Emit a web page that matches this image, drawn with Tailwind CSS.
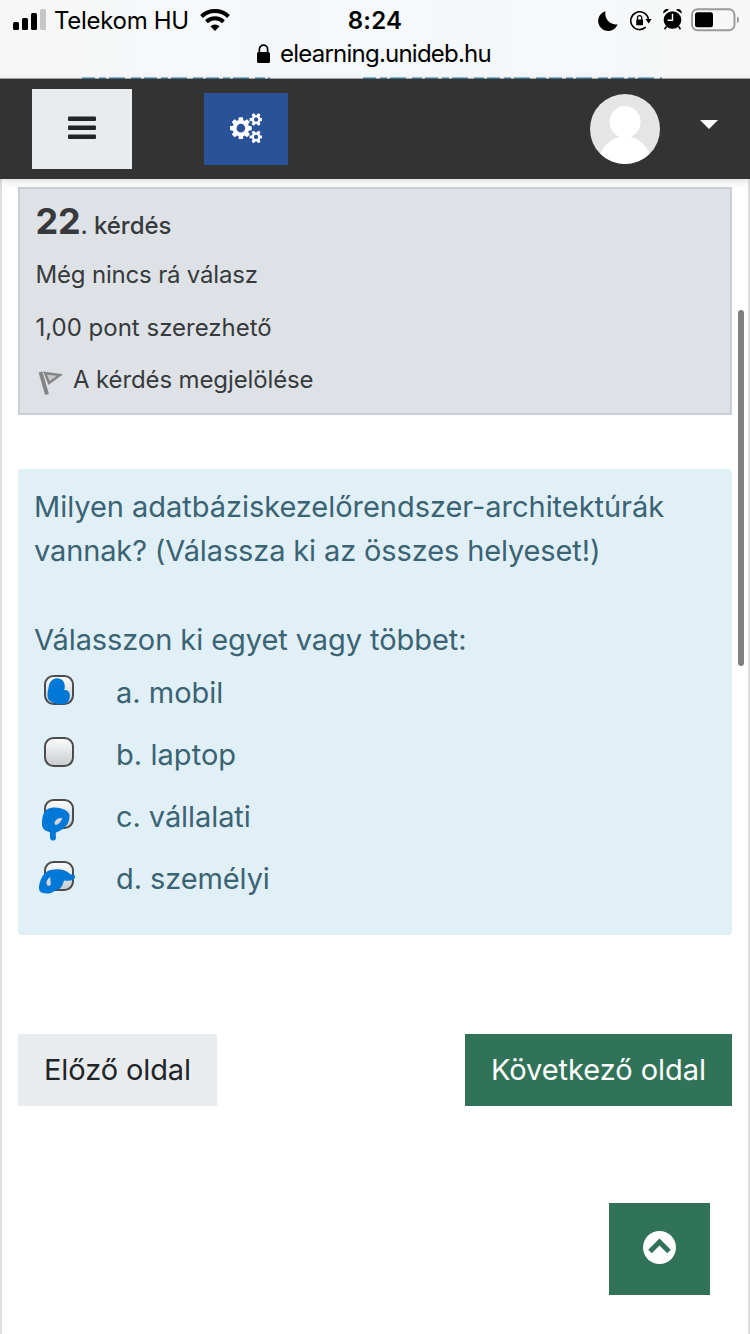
<!DOCTYPE html>
<html lang="hu">
<head>
<meta charset="utf-8">
<title>elearning.unideb.hu</title>
<script src="https://cdn.jsdelivr.net/npm/@tailwindcss/browser@4"></script>
</head>
<body class="bg-white">
<div class="relative flex h-[1334px] w-[750px] flex-col overflow-hidden font-['Inter','Noto_Sans',sans-serif]">

  <!-- Status bar and address -->
  <header class="relative h-[79px] shrink-0 bg-linear-to-r from-[#f7f7f7] via-[#f5f9fc] to-[#f7f7f7]">
    <div class="grid h-[40px] grid-cols-[300px_150px_300px] items-center">
      <div class="flex items-center pl-[13px]">
        <svg class="mt-[-1px] h-[21px] w-[33px]" viewBox="0 0 33 21"><rect x="0" y="13" width="6" height="8" rx="1.5"/><rect x="9" y="9" width="6" height="12" rx="1.5"/><rect x="18" y="4" width="6" height="17" rx="1.5"/><rect x="27" y="0" width="6" height="21" rx="1.5" fill="#c6c6c6"/></svg>
        <span class="ml-[8px] pt-[2px] text-[24px] leading-[36px] tracking-[-0.3px] whitespace-nowrap">Telekom HU</span>
        <svg class="ml-[11px] h-[22px] w-[30px]" viewBox="0 0 30 22" fill="none" stroke="#000" stroke-width="4"><path d="M1.500 7.500a19.500 19.500 0 0 1 27 0"/><path d="M6.500 12.700a12.300 12.300 0 0 1 17 0"/><path d="M15 22l-4.600-4.700a6.500 6.500 0 0 1 9.200 0z" fill="#000" stroke="none"/></svg>
      </div>
      <div class="pt-[2px] text-center text-[24px] leading-[36px] font-semibold tracking-[0.2px]">8:24</div>
      <div class="flex items-center pl-[148px]">
        <svg class="mt-[1px] h-[20px] w-[20px]" viewBox="0 0 20 20"><path d="M7.500 0.300A10 10 0 1 0 19.600 13.300 10.800 10.800 0 0 1 7.500 0.300z"/></svg>
        <svg class="mt-[1px] ml-[12px] h-[20px] w-[22px]" viewBox="0 0 22 20"><path d="M15.700 16.200A8.900 8.900 0 1 1 18.400 8" fill="none" stroke="#000" stroke-width="1.600"/><path d="M15.600 8h6l-3 4.500z"/><rect x="6.200" y="8.500" width="6.800" height="5.800" rx=".6"/><path d="M7.500 9V6.800a2.100 2.100 0 0 1 4.200 0V9" fill="none" stroke="#000" stroke-width="1.300"/></svg>
        <svg class="mt-[-1px] ml-[11px] h-[21px] w-[19px]" viewBox="0 0 19 21"><circle cx="9.500" cy="11" r="8.800"/><path d="M0.300 4.500A3.600 3.600 0 0 1 6 0.800zM18.700 4.500A3.600 3.600 0 0 0 13 0.800z"/><path d="M3.500 17.500l-2 2.700M15.500 17.500l2 2.700" stroke="#000" stroke-width="1.600"/><path d="M9.500 4.800v6.400H4.600" fill="none" stroke="#fff" stroke-width="1.400"/></svg>
        <svg class="ml-[9px] h-[24px] w-[49px]" viewBox="0 0 49 24"><rect x="1" y="1.200" width="42.500" height="21" rx="5.500" fill="none" stroke="#999" stroke-width="1.900"/><rect x="4" y="4.200" width="18" height="15" rx="2.500"/><path d="M46 8.500c1.700.8 2 1.800 2 3.200s-.3 2.500-2 3.300z" fill="#999"/></svg>
      </div>
    </div>
    <div class="flex h-[30px] items-center pl-[257px]">
      <svg class="mt-[-2px] h-[20px] w-[13px]" viewBox="0 0 13 20"><rect x="0" y="8" width="13" height="11" rx="1.500"/><path d="M2.400 9V5.200a4.100 4.100 0 0 1 8.200 0V9" fill="none" stroke="#000" stroke-width="1.700"/></svg>
      <span class="mt-[-2px] ml-[10px] text-[24px] leading-[30px] tracking-[-0.77px]">elearning.unideb.hu</span>
    </div>
    <!-- Sliver of page heading behind the toolbar -->
    <svg class="absolute bottom-0 left-0 h-[2px] w-[750px]" viewBox="0 0 750 2"><path d="M0 1.500H750" stroke="#aaa"/><path d="M82 1.300H270M363 1.300H662" stroke="#3c7592" stroke-width="1.400" stroke-dasharray="13 4 7 3 16 6 10 3"/></svg>
  </header>

  <!-- Site navigation -->
  <nav class="relative z-10 flex h-[100px] shrink-0 items-center bg-[#333] pl-[32px] shadow-[0_2px_8px_rgba(0,0,0,0.15)]">
    <button class="flex h-[80px] w-[100px] items-center justify-center bg-[#e9ecef]" aria-label="Menü">
      <svg class="mt-[-3px] h-[24px] w-[28px]" viewBox="0 0 28 24" fill="#212529"><rect y="0.500" width="28" height="4.600" rx="1"/><rect y="9.500" width="28" height="4.600" rx="1"/><rect y="18.500" width="28" height="4.600" rx="1"/></svg>
    </button>
    <button class="ml-[72px] flex h-[72px] w-[84px] items-center justify-center bg-[#2a5298]" aria-label="Beállítások">
      <svg class="mt-[-2px] h-[30.400px] w-[32.600px]" viewBox="0 0 1920 1792" fill="#fff"><path d="M896 896q0-106-75-181t-181-75-181 75-75 181 75 181 181 75 181-75 75-181zm768 512q0-52-38-90t-90-38-90 38-38 90q0 53 37.500 90.500t90.500 37.500 90.500-37.500 37.500-90.500zm0-1024q0-52-38-90t-90-38-90 38-38 90q0 53 37.500 90.500t90.500 37.500 90.500-37.500 37.500-90.500zm-384 421v185q0 10-7 19.500t-16 10.500l-155 24q-11 35-32 76 34 48 90 115 7 11 7 20 0 12-7 19-23 30-82.500 89.500t-78.500 59.500q-11 0-21-7l-115-90q-37 19-77 31-11 108-23 155-7 24-30 24h-186q-11 0-20-7.500t-10-17.500l-23-153q-34-10-75-31l-118 89q-7 7-20 7-11 0-21-8-144-133-144-160 0-9 7-19 10-14 41-53t47-61q-23-44-35-82l-152-24q-10-1-17-9.500t-7-19.500v-185q0-10 7-19.500t16-10.500l155-24q11-35 32-76-34-48-90-115-7-11-7-20 0-12 7-20 22-30 82-89t79-59q11 0 21 7l115 90q34-18 77-32 11-108 23-154 7-24 30-24h186q11 0 20 7.500t10 17.500l23 153q34 10 75 31l118-89q8-7 20-7 11 0 21 8 144 133 144 160 0 8-7 19-12 16-42 54t-45 60q23 48 34 82l152 23q10 2 17 10.500t7 19.500zm640 533v140q0 16-149 31-12 27-30 52 51 113 51 138 0 4-4 7-122 71-124 71-8 0-46-47t-52-68q-20 2-30 2t-30-2q-14 21-52 68t-46 47q-2 0-124-71-4-3-4-7 0-25 51-138-18-25-30-52-149-15-149-31v-140q0-16 149-31 13-29 30-52-51-113-51-138 0-4 4-7 4-2 35-20t59-34 30-16q8 0 46 46.500t52 67.500q20-2 30-2t30 2q51-71 92-112l6-2q4 0 124 70 4 3 4 7 0 25-51 138 17 23 30 52 149 15 149 31zm0-1024v140q0 16-149 31-12 27-30 52 51 113 51 138 0 4-4 7-122 71-124 71-8 0-46-47t-52-68q-20 2-30 2t-30-2q-14 21-52 68t-46 47q-2 0-124-71-4-3-4-7 0-25 51-138-18-25-30-52-149-15-149-31v-140q0-16 149-31 13-29 30-52-51-113-51-138 0-4 4-7 4-2 35-20t59-34 30-16q8 0 46 46.500t52 67.500q20-2 30-2t30 2q51-71 92-112l6-2q4 0 124 70 4 3 4 7 0 25-51 138 17 23 30 52 149 15 149 31z"/></svg>
    </button>
    <div class="ml-auto h-[70px] w-[70px] overflow-hidden rounded-full bg-[#e5e5e5]">
      <svg class="h-full w-full" viewBox="0 0 70 70"><g fill="#fff" style="filter:blur(.7px)"><ellipse cx="35" cy="28" rx="15.500" ry="16"/><rect x="29" y="38" width="12" height="8"/><path d="M10 61C14 49 24 43 35 42c11 1 21 7 25 19v14H10z"/></g></svg>
    </div>
    <svg class="mt-[-9px] mr-[32px] ml-[40px] h-[9px] w-[18px]" viewBox="0 0 18 9"><path d="M0 0h18L9 9z" fill="#fff"/></svg>
  </nav>

  <main class="flex grow flex-col border-x-2 border-[#dedede] px-[16px] pt-[8px]">
    <!-- Question info -->
    <section class="flex h-[228px] shrink-0 flex-col border-2 border-[#caced7] bg-[#dee2e6] pl-[15.500px] text-[24px] text-[#373a3c]">
      <h3 class="mt-[7px] flex h-[50px] items-baseline leading-[50px]"><span class="text-[36px] font-bold tracking-[-0.2px]">22</span><span class="font-medium">. kérdés</span></h3>
      <div class="mt-[11px] leading-[36px] tracking-[-0.18px]">Még nincs rá válasz</div>
      <div class="mt-[17px] leading-[36px]">1,00 pont szerezhető</div>
      <div class="mt-[16px] flex leading-[36px] tracking-[-0.12px]">
        <svg class="mt-[7px] mr-[10px] ml-[1.500px] h-[28px] w-[26px]" viewBox="0 0 26 28" fill="none" style="filter:blur(.7px)"><path d="M3.500 3L10 25.500" stroke="#858585" stroke-width="4"/><path d="M8 4L23 6 12 14z" fill="#c4c6c8" stroke="#858585" stroke-width="2.400"/></svg>
        <span>A kérdés megjelölése</span>
      </div>
    </section>

    <!-- Question -->
    <section class="mt-[54px] h-[466px] shrink-0 rounded-[4px] bg-[#e1f0f7] px-[16px] pt-[16px] text-[29px] leading-[44px] text-[#3a6374]">
      <p><span class="tracking-[-0.04px]">Milyen adatbáziskezelőrendszer-architektúrák</span><br><span class="tracking-[-0.13px]">vannak? (Válassza ki az összes helyeset!)</span></p>
      <p class="mt-[45px] tracking-[-0.07px]">Válasszon ki egyet vagy többet:</p>
      <ul class="mt-[9px] flex flex-col gap-[18px]">
        <li class="flex h-[44px]"><svg class="h-[50px] w-[82px] shrink-0 overflow-visible" viewBox="0 0 82 50"><defs><linearGradient id="g" x2="0" y2="1"><stop stop-color="#fcfcfc"/><stop offset="1" stop-color="#c8cccf"/></linearGradient></defs><rect x="11" y="5" width="28" height="28" rx="8.500" fill="url(#g)" stroke="#4c4c4c" stroke-width="2"/><path d="M23 7.200C28 7 31 11 30.800 16c0 1.500-.4 2-.8 3 3.500-.5 6.200 2 5.800 6-.2 5-2.300 8-7.500 8.200C22.500 34 15.500 31 14 27.500c-1-3.500-.5-7 .500-10.500.5-5 3-9.500 8.500-9.800z" fill="#0078d7"/></svg><span>a. mobil</span></li>
        <li class="flex h-[44px]"><svg class="h-[50px] w-[82px] shrink-0 overflow-visible" viewBox="0 0 82 50"><rect x="11" y="5" width="28" height="28" rx="8.500" fill="url(#g)" stroke="#4c4c4c" stroke-width="2"/></svg><span class="tracking-[0.05px]">b. laptop</span></li>
        <li class="flex h-[44px]"><svg class="h-[50px] w-[82px] shrink-0 overflow-visible" viewBox="0 0 82 50"><rect x="11" y="5" width="28" height="28" rx="8.500" fill="url(#g)" stroke="#4c4c4c" stroke-width="2"/><path fill-rule="evenodd" d="M17 13c7-1.500 17 1.500 18.500 7 0 8-3 13.500-13.500 17.500-.6 2 .2 4-.1 6-.8 2.800-5 2.800-5.700 0-.5-2.500.2-4-.5-6.500C10 36 7.500 32.500 8 28c.2-8 2-14 9-15zM20.500 27.500c0 1.500.8 3 1.800 2.500 2.500-1 5.500-4 6-7-3 0-6 .5-7.800 4.500z" fill="#0078d7"/></svg><span class="tracking-[-0.08px]">c. vállalati</span></li>
        <li class="flex h-[44px]"><svg class="h-[50px] w-[82px] shrink-0 overflow-visible" viewBox="0 0 82 50"><rect x="11" y="5" width="28" height="28" rx="8.500" fill="url(#g)" stroke="#4c4c4c" stroke-width="2"/><path fill-rule="evenodd" d="M17 13c6-1.500 14-1 19 4 2.500 1.500 4.500-.5 5 2.500 0 4-6 5-11 4-1.500 6-3.500 9-8 9.500-4 3.500-9 4.500-14 2.800-4-2-3.500-6-2-10.800C8 19 11 14 17 13zM16.500 20c-3.500 2-5 6-4 8 1.500 2 4 .5 4.500-1-.5-2.500-1-4.500-.5-7z" fill="#0078d7"/></svg><span class="tracking-[-0.1px]">d. személyi</span></li>
      </ul>
    </section>

    <!-- Paging -->
    <div class="mt-[99px] flex h-[72px] shrink-0 justify-between text-[29px] leading-[72px]">
      <button class="w-[199px] bg-[#e9ecef] tracking-[-0.1px] text-[#212529]">Előző oldal</button>
      <button class="w-[267px] bg-[#317358] tracking-[-0.04px] text-white">Következő oldal</button>
    </div>
    <button class="mt-[97px] mr-[22px] flex h-[92px] w-[101px] shrink-0 items-center justify-center self-end bg-[#317358]" aria-label="Lap tetejére">
      <svg class="mt-[-3px] h-[33px] w-[33px]" viewBox="0 0 33 33"><circle cx="16.500" cy="16.500" r="16.500" fill="#fff"/><path d="M7 20.500l9.500-9.500 9.500 9.500" fill="none" stroke="#317358" stroke-width="5"/></svg>
    </button>
  </main>

  <!-- Scroll indicator -->
  <div class="absolute top-[310px] right-[6px] z-20 h-[356px] w-[6px] rounded-full bg-[#7f7f7f]"></div>
</div>
</body>
</html>
